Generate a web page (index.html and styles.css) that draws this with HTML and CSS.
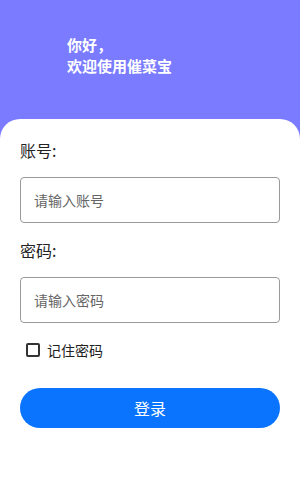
FILE: index.html
```html
<!DOCTYPE html>
<html>
<head>
    <meta charset="utf-8">
    <title>催菜宝 登录</title>
    <link rel="stylesheet" href="styles.css">
</head>
<body>
    <div class="header">
        <div class="hello">你好，</div>
        <div class="hello">欢迎使用催菜宝</div>
    </div>
    <div class="card">
        <div class="label">账号:</div>
        <input class="input" type="text" placeholder="请输入账号">
        <div class="label">密码:</div>
        <input class="input" type="password" placeholder="请输入密码">
        <label class="remember">
            <span class="box"></span>
            <span>记住密码</span>
        </label>
        <button class="login">登录</button>
    </div>
</body>
</html>
```

FILE: styles.css
```css
* {
    box-sizing: border-box;
}
body {
    margin: 0;
    background: #7b7bff;
    font-family: "Noto Sans CJK SC", "Noto Sans", sans-serif;
}
.header {
    height: 119px;
    padding: 34px 0 0 67px;
}
.hello {
    color: #fff;
    font-size: 15px;
    line-height: 21px;
    font-weight: bold;
}
.card {
    background: #fff;
    border-radius: 20px 20px 0 0;
    padding: 20px 20px 0;
    height: 381px;
}
.label {
    font-size: 16px;
    line-height: 22px;
    color: #222;
}
.input {
    display: block;
    width: 100%;
    height: 46px;
    margin: 16px 0;
    padding: 0 13px;
    border: 1px solid #999;
    border-radius: 4px;
    font-family: inherit;
    font-size: 14px;
    color: #333;
    outline: none;
}
.input::placeholder {
    color: #666;
}
.remember {
    display: flex;
    align-items: center;
    height: 22px;
    margin-top: 16px;
    padding-left: 6px;
    font-size: 14px;
    color: #222;
}
.box {
    width: 14px;
    height: 14px;
    border: 2px solid #333;
    border-radius: 2px;
    margin-right: 7px;
}
.login {
    display: block;
    width: 100%;
    height: 40px;
    margin-top: 27px;
    border: none;
    border-radius: 20px;
    background: #0a74ff;
    color: #fff;
    font-family: inherit;
    font-size: 16px;
}
```
